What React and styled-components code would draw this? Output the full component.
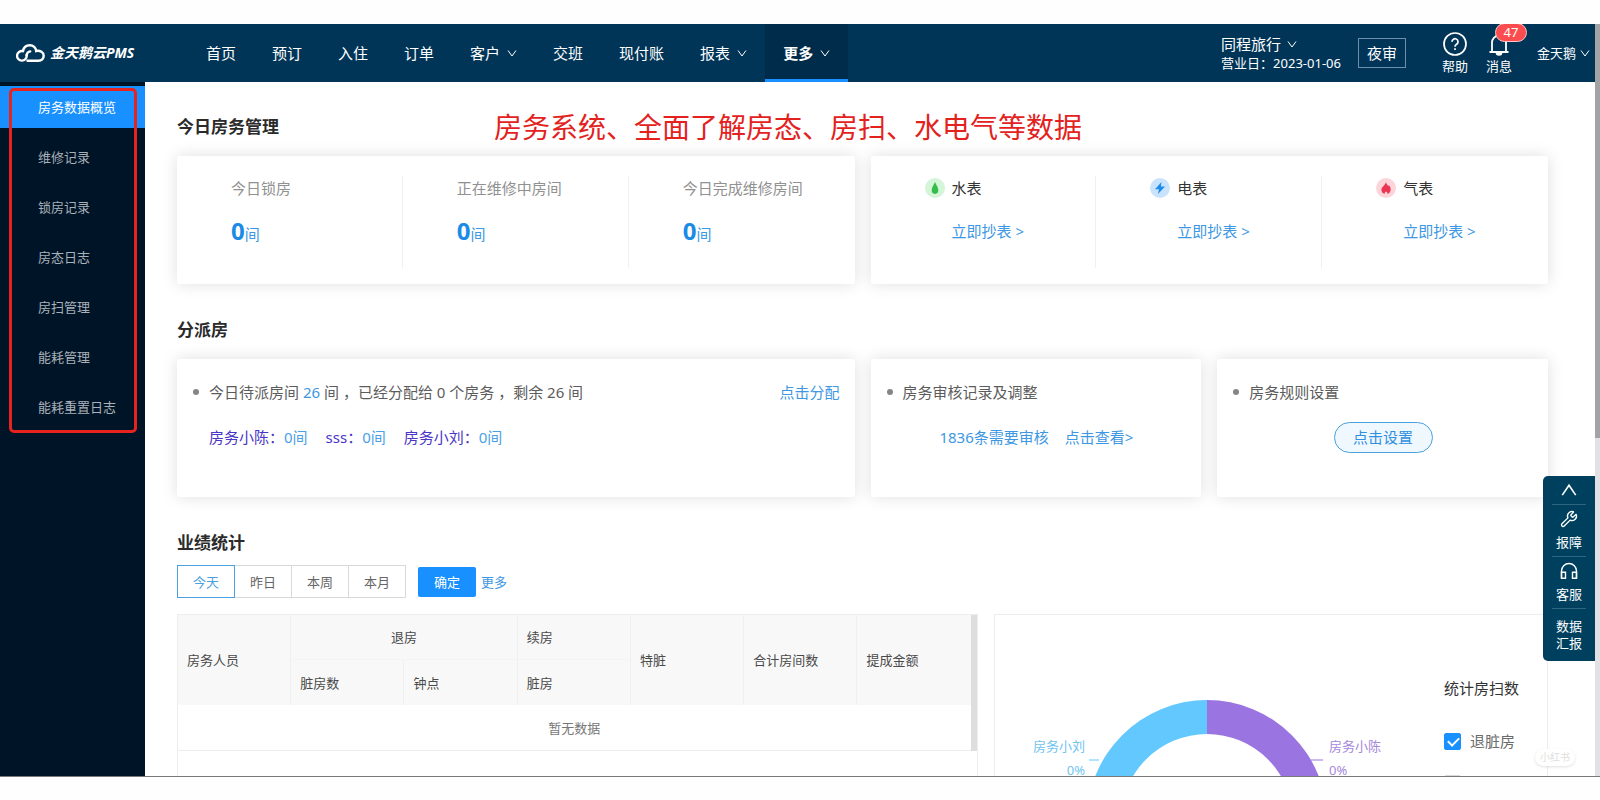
import React from "react";
import styled, { createGlobalStyle, css } from "styled-components";
import { Wrench } from "lucide-react";

const GlobalStyle = createGlobalStyle`
  * { box-sizing: border-box; }
  body {
    margin: 0;
    background: #fefefe;
    color: #333;
    font-family: "Noto Sans", "Noto Sans CJK SC", sans-serif;
    font-size: 15px;
    line-height: 24px;
  }
  a { color: inherit; text-decoration: none; }
  button { font: inherit; cursor: pointer; }
  h2, p { margin: 0; }
`;

const Page = styled.div`
  height: 100vh;
  padding: 24px 0 23px;
`;

const Frame = styled.div`
  display: flex;
  height: 100%;
  overflow: hidden;
  border-bottom: 1px solid #77777c;
`;

const Shell = styled.div`
  flex: 1;
  min-width: 0;
  display: flex;
  flex-direction: column;
  position: relative;
`;

const ScrollTrack = styled.div`
  width: 5px;
  background: #e2e2e4;
`;

const ScrollThumb = styled.div`
  height: 55%;
  background: #a3a3a5;
`;

/* ---------- header ---------- */

const Header = styled.header`
  flex: none;
  display: flex;
  align-items: center;
  height: 58px;
  padding-right: 5px;
  background: #003558;
  color: #fff;
`;

const Brand = styled.a`
  display: flex;
  align-items: center;
  gap: 5px;
  width: 188px;
  padding-left: 16px;
  font-size: 14px;
  font-weight: 700;
  font-style: italic;
  white-space: nowrap;
`;

const Nav = styled.nav`
  display: flex;
  align-self: stretch;
`;

const NavItem = styled.a`
  display: flex;
  align-items: center;
  gap: 7px;
  padding: 0 18px;
  white-space: nowrap;
  border-bottom: 3px solid transparent;
  border-top: 3px solid transparent;
  ${(p) =>
    p.$active &&
    css`
      border-top-color: #002c4b;
      border-bottom-color: #1890ff;
      background: #002c4b;
      font-weight: 700;
    `}
`;

const HeaderTools = styled.div`
  display: flex;
  align-items: center;
  margin-left: auto;
  white-space: nowrap;
`;

const HotelInfo = styled.div`
  margin-right: 17px;
  padding-top: 1px;
  line-height: 19px;
`;

const HotelName = styled.button`
  display: flex;
  align-items: center;
  gap: 6px;
  padding: 0;
  border: 0;
  background: none;
  color: #fff;
  line-height: 19px;
`;

const BusinessDay = styled.p`
  font-size: 13px;
`;

const AuditButton = styled.button`
  width: 48px;
  height: 30px;
  margin-right: 36px;
  padding: 0;
  border: 1px solid #6d8fac;
  background: none;
  color: #fff;
`;

const IconButton = styled.button`
  position: relative;
  display: flex;
  flex-direction: column;
  align-items: center;
  margin-right: ${(p) => p.$gap}px;
  padding: 2px 0 0;
  border: 0;
  background: none;
  color: #fff;
  font-size: 13px;
  line-height: 20px;
`;

const Badge = styled.span`
  position: absolute;
  top: -7px;
  left: 9px;
  width: 32px;
  height: 19px;
  border: 1px solid #ffc4c6;
  border-radius: 10px;
  background: #fb4c50;
  font-size: 13px;
  line-height: 16px;
  text-align: center;
`;

const UserButton = styled(HotelName)`
  gap: 4px;
  font-size: 13px;
`;

/* ---------- sidebar ---------- */

const Body = styled.div`
  flex: 1;
  min-height: 0;
  display: flex;
`;

const Sidebar = styled.aside`
  position: relative;
  flex: none;
  width: 145px;
  padding-top: 4px;
  background: #001427;
`;

const MenuItem = styled.a`
  display: block;
  margin-bottom: 8px;
  padding-left: 38px;
  color: ${(p) => (p.$active ? "#fff" : "#a9b1b9")};
  background: ${(p) => (p.$active ? "#1890ff" : "transparent")};
  font-size: 13px;
  line-height: 42px;
`;

const MenuMark = styled.div`
  position: absolute;
  top: 6px;
  left: 9px;
  right: 8px;
  height: 345px;
  border: 3px solid #e6231f;
  border-radius: 5px;
  pointer-events: none;
`;

/* ---------- content ---------- */

const Main = styled.main`
  position: relative;
  flex: 1;
  min-width: 0;
  padding: 33px 47px 0 32px;
  overflow: hidden;
  background: #fff;
`;

const Callout = styled.p`
  position: absolute;
  top: 25px;
  left: 349px;
  color: #e3221e;
  font-size: 28px;
  line-height: 40px;
  white-space: nowrap;
`;

const Section = styled.section`
  margin-bottom: 34px;
`;

const SectionTitle = styled.h2`
  margin-bottom: ${(p) => p.$gap || 17}px;
  color: #2b2b2b;
  font-size: 17px;
  font-weight: 600;
  line-height: 24px;
`;

const Cards = styled.div`
  display: grid;
  grid-template-columns: repeat(4, 1fr);
  gap: 16px;
`;

const Card = styled.article`
  grid-column: span ${(p) => p.$span || 1};
  min-height: ${(p) => p.$height}px;
  border-radius: 2px;
  background: #fff;
  box-shadow: 0 0 16px rgba(0, 0, 0, 0.13);
`;

const StatCard = styled(Card)`
  display: grid;
  grid-template-columns: repeat(3, 1fr);
  padding: 20px 0 16px;
`;

const Cell = styled.div`
  padding-left: 54px;
  border-right: 1px solid #f0f0f0;
  &:last-child { border-right: 0; }
`;

const StatLabel = styled.p`
  color: #919191;
`;

const StatValue = styled.p`
  margin-top: 16px;
  color: #3a98e4;
  line-height: 30px;
  strong {
    color: #1b8be6;
    font-size: 24px;
  }
`;

const MeterHead = styled.p`
  display: flex;
  align-items: center;
  gap: 7px;
`;

const TextLink = styled.a`
  color: #3d97e2;
`;

const MeterLink = styled(TextLink)`
  display: block;
  margin: 19px 0 0 27px;
`;

const TaskCard = styled(Card)`
  padding: 21px 15px 0 16px;
`;

const TaskHead = styled.div`
  display: flex;
  align-items: center;
  color: #5c5c5c;
  white-space: nowrap;
  &::before {
    content: "";
    width: 6px;
    height: 6px;
    margin-right: 10px;
    border-radius: 50%;
    background: #858585;
  }
  ${TextLink} { margin-left: auto; }
  span { color: #3d97e2; }
`;

const TaskBody = styled.div`
  display: flex;
  align-items: center;
  justify-content: ${(p) => (p.$center ? "center" : "flex-start")};
  gap: ${(p) => (p.$center ? 16 : 18)}px;
  height: 32px;
  margin-top: 17px;
  padding-left: ${(p) => (p.$center ? 0 : 16)}px;
  color: #4a35c8;
  white-space: nowrap;
  span { color: #4a9fe6; }
`;

const PillButton = styled.button`
  width: 99px;
  height: 31px;
  padding: 0;
  border: 1px solid #4ba1dc;
  border-radius: 16px;
  background: #eff7ff;
  color: #2f8fe0;
`;

/* ---------- statistics ---------- */

const Filters = styled.div`
  display: flex;
  align-items: center;
  margin-bottom: 16px;
  font-size: 13px;
`;

const RangeButton = styled.button`
  position: relative;
  width: 58px;
  height: 33px;
  margin-right: -1px;
  padding: 0;
  border: 1px solid #d9d9d9;
  background: #fff;
  color: #666;
  ${(p) =>
    p.$active &&
    css`
      z-index: 1;
      border-color: #4ba0e0;
      color: #4ba0e0;
    `}
`;

const ConfirmButton = styled.button`
  width: 58px;
  height: 30px;
  margin: 0 5px 0 13px;
  padding: 0;
  border: 0;
  border-radius: 2px;
  background: #1890ff;
  color: #fff;
`;

const StatsGrid = styled.div`
  display: grid;
  grid-template-columns: 13fr 9fr;
  gap: 16px;
`;

const Panel = styled.div`
  height: 400px;
  border: 1px solid #ededed;
`;

const TableWrap = styled.div`
  display: grid;
  grid-template-columns: 1fr 6px;
`;

const TableScroll = styled.div`
  background: #dedede;
`;

const Table = styled.table`
  width: 100%;
  table-layout: fixed;
  border-collapse: separate;
  border-spacing: 0;
  color: #4a4a4a;
  font-size: 13px;
  line-height: 20px;
  th, td {
    height: 46px;
    padding: 0 9px;
    font-weight: 400;
    text-align: left;
  }
  th {
    height: 45px;
    background: #f8f8f8;
    border-right: 1px solid #f0f0f0;
  }
  tr:first-child th:last-child { border-right-color: #f8f8f8; }
  tr:first-child th[scope="colgroup"] { border-bottom: 1px solid #f4f4f4; }
  th[colspan="2"], td { text-align: center; }
  td { border-bottom: 1px solid #ededed; color: #777; }
`;

const ChartPanel = styled(Panel)`
  display: flex;
  justify-content: space-between;
`;

const Chart = styled.svg`
  flex: none;
  margin: 85px 0 0 36px;
  font-size: 13px;
`;

const Legend = styled.fieldset`
  width: 103px;
  margin: 0;
  padding: 61px 0 0;
  border: 0;
  color: #333;
`;

const LegendTitle = styled.p`
  margin-bottom: 29px;
`;

const Check = styled.label`
  display: flex;
  align-items: center;
  gap: 9px;
  height: 24px;
  margin-bottom: 18px;
  color: #6a6a6a;
  white-space: nowrap;
`;

const CheckBox = styled.input`
  appearance: none;
  width: 17px;
  height: 17px;
  margin: 0;
  border: 1px solid #d9d9d9;
  border-radius: 2px;
  background: #fff;
  &:checked {
    border-color: #1890ff;
    background: #1890ff;
  }
  &:checked::after {
    content: "";
    display: block;
    width: 5px;
    height: 9px;
    margin: 1px 0 0 5px;
    border: solid #fff;
    border-width: 0 2px 2px 0;
    transform: rotate(45deg);
  }
`;

/* ---------- floating pieces ---------- */

const Dock = styled.div`
  position: absolute;
  top: 452px;
  right: 0;
  width: 52px;
  padding: 0 9px;
  border-radius: 5px 0 0 5px;
  background: #00405f;
`;

const DockItem = styled.button`
  display: flex;
  flex-direction: column;
  align-items: center;
  justify-content: center;
  gap: 6px;
  width: 100%;
  height: ${(p) => p.$height}px;
  padding: 0;
  border: 0;
  border-bottom: 1px solid #2f6480;
  background: none;
  color: #fff;
  font-size: 13px;
  line-height: 17px;
  &:last-child { border-bottom: 0; }
`;

const Watermark = styled.span`
  position: absolute;
  right: 20px;
  bottom: 10px;
  padding: 0 5px;
  border-radius: 9px;
  background: #fff;
  box-shadow: 0 1px 3px rgba(0, 0, 0, 0.12);
  color: #dedede;
  font-size: 10px;
  line-height: 17px;
`;

/* ---------- icons ---------- */

const Chevron = ({ up, size = 10 }) => (
  <svg width={size} height={size} viewBox="0 0 10 10" fill="none" stroke="currentColor" strokeWidth="1" aria-hidden="true">
    <path d={up ? "M0.8 8.2L5 2l4.2 6.2" : "M1 2.5L5 8l4-5.5"} />
  </svg>
);

const CloudLogo = () => (
  <svg width="29" height="18" viewBox="0 0 29 18" fill="none" stroke="#fff" strokeWidth="2.4" strokeLinecap="round" aria-hidden="true">
    <path d="M10.6 11.2A4.8 4.8 0 1 1 7 7.2M7 7.2C7.6 3.600 10.400 1.300 13.800 1.300c3.400 0 6.200 2.500 6.400 5.700 4-.8 7.500 1.500 7.500 4.800 0 2.900-2.100 5-5.200 5H11.500" />
    <path d="M10.600 11.200C11 8.800 12.200 7.600 14.200 7.400" />
  </svg>
);

const HelpIcon = () => (
  <svg width="24" height="24" viewBox="0 0 24 24" fill="none" stroke="currentColor" strokeWidth="1.7" aria-hidden="true">
    <circle cx="12" cy="12" r="11" />
    <path d="M9 9.800a3 3 0 1 1 4.600 2.500c-1 .7-1.600 1.200-1.600 2.400" />
    <path d="M12 16.300v1.700" />
  </svg>
);

const BellIcon = () => (
  <svg width="24" height="24" viewBox="0 0 24 24" fill="none" stroke="currentColor" strokeWidth="1.8" aria-hidden="true">
    <path d="M5 20V10.500a7 7 0 0 1 14 0V20M2.500 20h19M12 3.500V1.500" />
    <path d="M9.500 20.500a2.500 2.300 0 0 0 5 0" fill="currentColor" />
  </svg>
);

const HeadsetIcon = () => (
  <svg width="18" height="18" viewBox="0 0 18 18" fill="none" stroke="currentColor" strokeWidth="1.4" aria-hidden="true">
    <path d="M1.500 16.300V9a7.500 7.500 0 0 1 15 0v7.300" />
    <path d="M1.500 10.300h4v6h-4zM12.500 10.300h4v6h-4z" />
  </svg>
);

const MeterIcon = ({ tone, back, path }) => (
  <svg width="20" height="20" viewBox="0 0 20 20" aria-hidden="true">
    <circle cx="10" cy="10" r="10" fill={back} />
    <path d={path} fill={tone} />
  </svg>
);

/* ---------- data ---------- */

const navItems = [
  { label: "首页" },
  { label: "预订" },
  { label: "入住" },
  { label: "订单" },
  { label: "客户", menu: true },
  { label: "交班" },
  { label: "现付账" },
  { label: "报表", menu: true },
  { label: "更多", menu: true, active: true },
];

const menuItems = ["房务数据概览", "维修记录", "锁房记录", "房态日志", "房扫管理", "能耗管理", "能耗重置日志"];

const stats = ["今日锁房", "正在维修中房间", "今日完成维修房间"];

const meters = [
  {
    label: "水表",
    tone: "#35bd4b",
    back: "#d4f5d8",
    path: "M10 4c1 2.700 3.300 5.300 3.300 8.100A3.300 3.600 0 0 1 10 15.900a3.300 3.600 0 0 1-3.300-3.800C6.700 9.300 9 6.700 10 4z",
  },
  {
    label: "电表",
    tone: "#1c8bea",
    back: "#c8e3fb",
    path: "M11.500 4L5 11.200h4L8 16l7-7.400h-4.200z",
  },
  {
    label: "气表",
    tone: "#ec3455",
    back: "#fbd5da",
    path: "M10 4c.3 2.200 1.500 2.700 2.300 4l.7-.8c1.300 1.800 2 3.400 1.600 5.200-.5 2-1.700 3.100-3 3.500.2-1-.6-1.700-1.500-2.500-1 .7-1.800 1.500-1.600 2.500-1.800-.5-3-1.900-3.100-3.800C5.200 9 9.300 7.500 10 4z",
  },
];

const ranges = ["今天", "昨日", "本周", "本月"];

export default function App() {
  return (
    <Page>
      <GlobalStyle />
      <Frame>
        <Shell>
          <Header>
            <Brand href="#">
              <CloudLogo />
              金天鹅云PMS
            </Brand>
            <Nav>
              {navItems.map((item) => (
                <NavItem key={item.label} href="#" $active={item.active}>
                  {item.label}
                  {item.menu && <Chevron />}
                </NavItem>
              ))}
            </Nav>
            <HeaderTools>
              <HotelInfo>
                <HotelName>
                  同程旅行
                  <Chevron />
                </HotelName>
                <BusinessDay>营业日：2023-01-06</BusinessDay>
              </HotelInfo>
              <AuditButton>夜审</AuditButton>
              <IconButton $gap={18}>
                <HelpIcon />
                帮助
              </IconButton>
              <IconButton $gap={25}>
                <BellIcon />
                消息
                <Badge>47</Badge>
              </IconButton>
              <UserButton>
                金天鹅
                <Chevron />
              </UserButton>
            </HeaderTools>
          </Header>

          <Body>
            <Sidebar>
              <nav>
                {menuItems.map((label, i) => (
                  <MenuItem key={label} href="#" $active={i === 0}>
                    {label}
                  </MenuItem>
                ))}
              </nav>
              <MenuMark />
            </Sidebar>

            <Main>
              <Callout>房务系统、全面了解房态、房扫、水电气等数据</Callout>

              <Section>
                <SectionTitle>今日房务管理</SectionTitle>
                <Cards>
                  <StatCard $span={2} $height={128}>
                    {stats.map((label) => (
                      <Cell key={label}>
                        <StatLabel>{label}</StatLabel>
                        <StatValue>
                          <strong>0</strong>间
                        </StatValue>
                      </Cell>
                    ))}
                  </StatCard>
                  <StatCard $span={2} $height={128}>
                    {meters.map((m) => (
                      <Cell key={m.label}>
                        <MeterHead>
                          <MeterIcon {...m} />
                          {m.label}
                        </MeterHead>
                        <MeterLink href="#">立即抄表 &gt;</MeterLink>
                      </Cell>
                    ))}
                  </StatCard>
                </Cards>
              </Section>

              <Section>
                <SectionTitle>分派房</SectionTitle>
                <Cards>
                  <TaskCard $span={2} $height={138}>
                    <TaskHead>
                      <p>
                        今日待派房间 <span>26</span> 间 ，已经分配给 0 个房务 ，剩余 26 间
                      </p>
                      <TextLink href="#">点击分配</TextLink>
                    </TaskHead>
                    <TaskBody>
                      <p>房务小陈：<span>0间</span></p>
                      <p>sss：<span>0间</span></p>
                      <p>房务小刘：<span>0间</span></p>
                    </TaskBody>
                  </TaskCard>
                  <TaskCard $height={138}>
                    <TaskHead>
                      <p>房务审核记录及调整</p>
                    </TaskHead>
                    <TaskBody $center>
                      <TextLink href="#">1836条需要审核</TextLink>
                      <TextLink href="#">点击查看&gt;</TextLink>
                    </TaskBody>
                  </TaskCard>
                  <TaskCard $height={138}>
                    <TaskHead>
                      <p>房务规则设置</p>
                    </TaskHead>
                    <TaskBody $center>
                      <PillButton>点击设置</PillButton>
                    </TaskBody>
                  </TaskCard>
                </Cards>
              </Section>

              <Section>
                <SectionTitle $gap={10}>业绩统计</SectionTitle>
                <Filters>
                  {ranges.map((label, i) => (
                    <RangeButton key={label} $active={i === 0}>
                      {label}
                    </RangeButton>
                  ))}
                  <ConfirmButton>确定</ConfirmButton>
                  <TextLink href="#">更多</TextLink>
                </Filters>
                <StatsGrid>
                  <Panel>
                    <TableWrap>
                      <Table>
                        <thead>
                          <tr>
                            <th rowSpan={2} scope="col">房务人员</th>
                            <th colSpan={2} scope="colgroup">退房</th>
                            <th scope="colgroup">续房</th>
                            <th rowSpan={2} scope="col">特脏</th>
                            <th rowSpan={2} scope="col">合计房间数</th>
                            <th rowSpan={2} scope="col">提成金额</th>
                          </tr>
                          <tr>
                            <th scope="col">脏房数</th>
                            <th scope="col">钟点</th>
                            <th scope="col">脏房</th>
                          </tr>
                        </thead>
                        <tbody>
                          <tr>
                            <td colSpan={7}>暂无数据</td>
                          </tr>
                        </tbody>
                      </Table>
                      <TableScroll />
                    </TableWrap>
                  </Panel>
                  <ChartPanel>
                    <Chart width="352" height="242" viewBox="0 0 352 242" role="img" aria-label="房扫数占比">
                      <path d="M176 0a120 120 0 0 0 0 240v-34a86 86 0 0 1 0-172z" fill="#63c8fe" />
                      <path d="M176 0a120 120 0 0 1 0 240v-34a86 86 0 0 0 0-172z" fill="#9a74e0" />
                      <path d="M58 60h10" stroke="#63c8fe" />
                      <path d="M280 60h12" stroke="#9a74e0" />
                      <text x="54" y="51" textAnchor="end" fill="#6fc4ee">房务小刘</text>
                      <text x="54" y="75" textAnchor="end" fill="#6fc4ee">0%</text>
                      <text x="298" y="51" fill="#a588dc">房务小陈</text>
                      <text x="298" y="75" fill="#a588dc">0%</text>
                    </Chart>
                    <Legend>
                      <LegendTitle>统计房扫数</LegendTitle>
                      <Check>
                        <CheckBox type="checkbox" defaultChecked />
                        退脏房
                      </Check>
                      <Check>
                        <CheckBox type="checkbox" />
                        退钟点
                      </Check>
                    </Legend>
                  </ChartPanel>
                </StatsGrid>
              </Section>
            </Main>
          </Body>

          <Dock>
            <DockItem $height={29} aria-label="回到顶部">
              <Chevron up size={16} />
            </DockItem>
            <DockItem $height={52}>
              <Wrench size={18} strokeWidth={1.8} />
              报障
            </DockItem>
            <DockItem $height={52}>
              <HeadsetIcon />
              客服
            </DockItem>
            <DockItem $height={52}>
              <span>
                数据
                <br />
                汇报
              </span>
            </DockItem>
          </Dock>
          <Watermark>小红书</Watermark>
        </Shell>
        <ScrollTrack>
          <ScrollThumb />
        </ScrollTrack>
      </Frame>
    </Page>
  );
}
